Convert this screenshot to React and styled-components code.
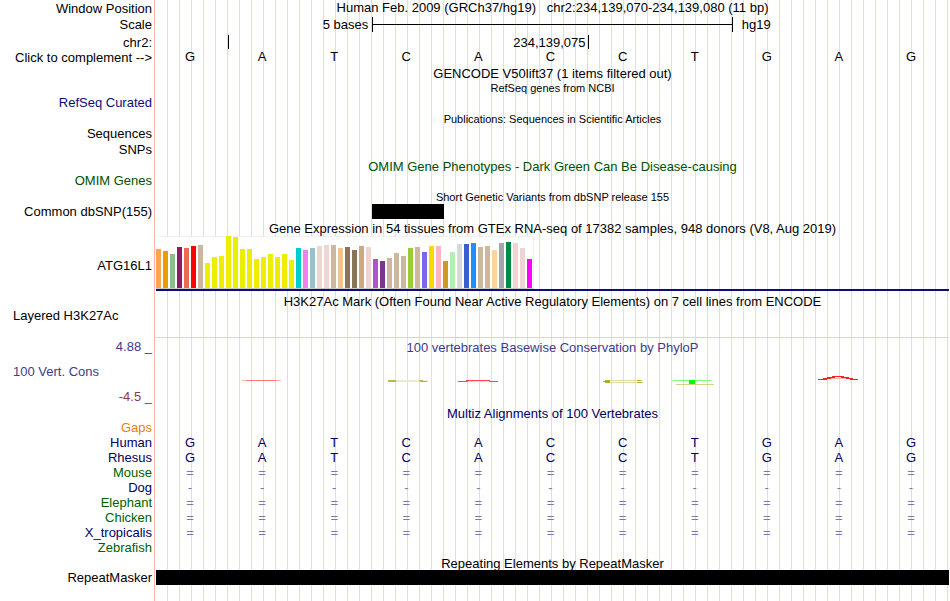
import React from 'react';
import styled, { createGlobalStyle } from 'styled-components';

const GlobalStyle = createGlobalStyle`
  * {
    box-sizing: border-box;
  }

  body {
    margin: 0;
    background: #fff;
    color: #000;
    font: 13px/15px "Liberation Sans", Arial, sans-serif;
  }
`;

const Browser = styled.main`
  display: flex;
  flex-direction: column;
  min-height: 100vh;
  padding-right: 1px;
`;

const Row = styled.section`
  display: flex;
  gap: 1px;
  height: ${({ $height }) => ($height ? `${$height}px` : 'auto')};
  flex: ${({ $height }) => ($height ? 'none' : '1')};
`;

const Label = styled.div`
  display: flex;
  flex: none;
  flex-direction: column;
  justify-content: ${({ $middle }) => ($middle ? 'center' : 'flex-start')};
  width: 155px;
  padding: 0 2px 0 13px;
  border-right: 1px solid #ffb4b4;
  color: ${({ $color }) => $color || '#000'};
  text-align: ${({ $left }) => ($left ? 'left' : 'right')};
  white-space: nowrap;
`;

const Plot = styled.div`
  flex: 1;
  min-width: 0;
  border-bottom: ${({ $rule }) => ($rule ? '1px solid #ffd080' : 'none')};
  background: repeating-linear-gradient(
    to right,
    transparent 0 11px,
    #dcdcf8 11px 12px
  );
`;

const Title = styled.h2`
  margin: 0;
  color: ${({ $color }) => $color || '#000'};
  font-size: ${({ $small }) => ($small ? '11px' : '13px')};
  font-weight: normal;
  line-height: 15px;
  text-align: center;
  white-space: pre;
`;

const Columns = styled.div`
  display: grid;
  grid-template-columns: repeat(11, 1fr);
`;

const Bases = styled(Columns)`
  color: ${({ $color }) => $color || '#000'};
`;

const Base = styled.span`
  padding-right: 4px;
  text-align: center;
`;

const ScaleText = styled.span`
  grid-column: 1 / 4;
  padding-right: 4px;
  text-align: right;
`;

const ScaleBar = styled.div`
  display: flex;
  grid-column: 4 / 9;
  align-items: center;
  height: 15px;
  border: solid #000;
  border-width: 0 1px;

  &::before {
    content: '';
    flex: 1;
    height: 1px;
    background: #000;
  }
`;

const Assembly = styled.span`
  grid-column: 9 / 11;
  padding-left: 9px;
`;

const Tick = styled.div`
  grid-column: 2;
  height: 14px;
  border-left: 1px solid #000;
`;

const Position = styled.span`
  grid-column: 3 / 7;
  height: 14px;
  padding-right: 2px;
  border-right: 1px solid #000;
  text-align: right;
`;

const ComplementButton = styled.button`
  padding: 0;
  border: 0;
  background: none;
  color: inherit;
  font: inherit;
  text-align: right;
  cursor: pointer;
`;

const Variant = styled.div`
  grid-column: 4;
  height: 15px;
  background: #000;
`;

const Expression = styled.div`
  height: 55px;
  border-bottom: 2px solid #0c0c78;
`;

const Bars = styled.div`
  display: flex;
  align-items: flex-end;
  gap: 2px;
  width: fit-content;
  height: 53px;
  padding-right: 1px;
  border-right: 1px solid #f0f0f0;
  border-bottom: 1px solid #c8c8c8;
  background: linear-gradient(#f0f0f0 0 1px, #fff 1px);
`;

const Bar = styled.div`
  width: 5px;
`;

const Range = styled(Label)`
  gap: 10px;
  padding-top: 1px;
`;

const RangeLine = styled.span`
  color: ${({ $color }) => $color};
  text-align: ${({ $left }) => ($left ? 'left' : 'right')};
`;

const Conservation = styled(Plot)`
  display: flex;
  flex-direction: column;
  gap: 10px;
  padding-top: 2px;
`;

const Graph = styled.svg`
  display: block;
  width: 100%;
  height: 30px;
`;

const Repeat = styled.div`
  height: 15px;
  background: #000;
`;

const NAVY = '#00005f';
const GREEN = '#005000';
const BLUE = '#3c3c8c';

const bases = 'GATCACCTGAG'.split('');

// [height, colour] for each of the 54 tissues
const tissues = [
  [39, '#ffa54f'], [37, '#ee9a00'], [34, '#8fbc8f'], [41, '#8b1c62'],
  [40, '#ee6a50'], [42, '#ff0000'], [43, '#cdb79e'], [25, '#eeee00'],
  [31, '#eeee00'], [32, '#eeee00'], [52, '#eeee00'], [51, '#eeee00'],
  [39, '#eeee00'], [39, '#eeee00'], [29, '#eeee00'], [31, '#eeee00'],
  [34, '#eeee00'], [31, '#eeee00'], [34, '#eeee00'], [28, '#eeee00'],
  [40, '#00cdcd'], [38, '#ee82ee'], [40, '#9ac0cd'], [42, '#eed5d2'],
  [43, '#eed5d2'], [43, '#cdb79e'], [40, '#eec591'], [41, '#8b7355'],
  [38, '#8b7355'], [42, '#cdaa7d'], [41, '#eed5d2'], [29, '#b452cd'],
  [27, '#7a378b'], [30, '#cdb79e'], [35, '#cdb79e'], [32, '#cdb79e'],
  [40, '#9acd32'], [41, '#cdb79e'], [36, '#7a67ee'], [42, '#ffd700'],
  [42, '#ffb6c1'], [27, '#cd9b1d'], [36, '#b4eeb4'], [44, '#d9d9d9'],
  [44, '#3a5fcd'], [45, '#1e90ff'], [41, '#cdb79e'], [42, '#cdb79e'],
  [38, '#ffd39b'], [45, '#a6a6a6'], [46, '#008b45'], [45, '#eed5d2'],
  [40, '#eed5d2'], [29, '#ff00ff'],
];

const species = [
  { name: 'Human', color: NAVY },
  { name: 'Rhesus', color: NAVY },
  { name: 'Mouse', color: '#005f00', mark: '=' },
  { name: 'Dog', color: NAVY, mark: '-' },
  { name: 'Elephant', color: '#005f00', mark: '=' },
  { name: 'Chicken', color: '#005f00', mark: '=' },
  { name: 'X_tropicalis', color: NAVY, mark: '=' },
];

const TitleRow = ({ height = 15, children, ...props }) => (
  <Row $height={height}>
    <Label />
    <Plot>
      <Title {...props}>{children}</Title>
    </Plot>
  </Row>
);

const LabelRow = ({ height = 16, color, left, rule, children }) => (
  <Row $height={height}>
    <Label $color={color} $left={left}>{children}</Label>
    <Plot $rule={rule} />
  </Row>
);

const PhyloP = () => (
  <Graph viewBox="0 0 793 30" preserveAspectRatio="none" shapeRendering="crispEdges" aria-hidden="true">
    <path d="M86 15h39v1h-39z" fill="#ffb4b4" />
    <path d="M91 15h30v1h-30z" fill="#ff7878" />

    <path d="M232 15h40v2h-40z" fill="#ebebc8" />
    <path d="M232 15h8v2h-8zM263 15h4v1h-4zM264 16h7v1h-7z" fill="#b9b946" />

    <path d="M302 16h10v1h-10zM333 16h9v1h-9z" fill="#ff4646" />
    <path d="M310 15h24v1h-24z" fill="#ff4646" />
    <path d="M312 16h20v1h-20z" fill="#ffdcdc" />

    <path d="M449 15h38v1h-38zM449 17h38v1h-38z" fill="#dcdca0" />
    <path d="M447 16h7v1h-7zM449 15h5v1h-5zM449 17h5v1h-5zM481 15h4v1h-4zM481 17h5v1h-5z" fill="#afaf28" />

    <path d="M517 15h38v1h-38z" fill="#78ff78" />
    <path d="M520 19h38v1h-38z" fill="#d2d28c" />
    <path d="M533 15h6v4h-6z" fill="#00ff00" />

    <path d="M662 14h9v1h-9zM667 13h8v1h-8zM671 12h8v1h-8zM676 11h12v1h-12zM685 12h8v1h-8zM690 13h7v1h-7zM694 14h8v1h-8z" fill="#ff1e1e" />
    <path d="M675 13h15v1h-15z" fill="#ffb4b4" />
  </Graph>
);

const App = () => {
  return (
    <>
      <GlobalStyle />
      <Browser>
        <Row $height={17}>
          <Label $middle>Window Position</Label>
          <Plot>
            <Title>{'Human Feb. 2009 (GRCh37/hg19)   chr2:234,139,070-234,139,080 (11 bp)'}</Title>
          </Plot>
        </Row>
        <Row $height={18}>
          <Label>Scale</Label>
          <Plot>
            <Columns>
              <ScaleText>5 bases</ScaleText>
              <ScaleBar />
              <Assembly>hg19</Assembly>
            </Columns>
          </Plot>
        </Row>
        <Row $height={14}>
          <Label>chr2:</Label>
          <Plot>
            <Columns>
              <Tick />
              <Position>234,139,075</Position>
            </Columns>
          </Plot>
        </Row>
        <Row $height={17}>
          <Label $middle>
            <ComplementButton type="button">{'Click to complement -->'}</ComplementButton>
          </Label>
          <Plot>
            <Bases>
              {bases.map((base, i) => <Base key={i}>{base}</Base>)}
            </Bases>
          </Plot>
        </Row>

        {/* Genes, publications and variants */}
        <TitleRow>GENCODE V50lift37 (1 items filtered out)</TitleRow>
        <TitleRow height={14} $small>RefSeq genes from NCBI</TitleRow>
        <LabelRow height={17} color="#0c0c78">RefSeq Curated</LabelRow>
        <TitleRow height={14} $small>Publications: Sequences in Scientific Articles</TitleRow>
        <LabelRow>Sequences</LabelRow>
        <LabelRow height={17}>SNPs</LabelRow>
        <TitleRow height={14} $color={GREEN}>OMIM Gene Phenotypes - Dark Green Can Be Disease-causing</TitleRow>
        <LabelRow height={17} color={GREEN}>OMIM Genes</LabelRow>
        <TitleRow height={14} $small>Short Genetic Variants from dbSNP release 155</TitleRow>
        <Row $height={17}>
          <Label>Common dbSNP(155)</Label>
          <Plot>
            <Columns>
              <Variant />
            </Columns>
          </Plot>
        </Row>

        {/* Expression and regulation */}
        <TitleRow>Gene Expression in 54 tissues from GTEx RNA-seq of 17382 samples, 948 donors (V8, Aug 2019)</TitleRow>
        <Row $height={58}>
          <Label $middle>ATG16L1</Label>
          <Plot>
            <Expression>
              <Bars>
                {tissues.map(([height, color], i) => (
                  <Bar key={i} style={{ height, background: color }} />
                ))}
              </Bars>
            </Expression>
          </Plot>
        </Row>
        <TitleRow height={14}>H3K27Ac Mark (Often Found Near Active Regulatory Elements) on 7 cell lines from ENCODE</TitleRow>
        <LabelRow height={30} left rule>Layered H3K27Ac</LabelRow>

        {/* Conservation */}
        <Row $height={68}>
          <Range>
            <RangeLine $color={BLUE}>4.88 _</RangeLine>
            <RangeLine $color={BLUE} $left>100 Vert. Cons</RangeLine>
            <RangeLine $color="#8c3c3c">-4.5 _</RangeLine>
          </Range>
          <Conservation>
            <Title $color={BLUE}>100 vertebrates Basewise Conservation by PhyloP</Title>
            <PhyloP />
          </Conservation>
        </Row>
        <TitleRow height={14} $color={NAVY}>Multiz Alignments of 100 Vertebrates</TitleRow>
        <LabelRow height={15} color="#e68200">Gaps</LabelRow>
        {species.map(({ name, color, mark }) => (
          <Row key={name} $height={15}>
            <Label $color={color}>{name}</Label>
            <Plot>
              <Bases $color={mark ? '#7878af' : NAVY}>
                {bases.map((base, i) => <Base key={i}>{mark || base}</Base>)}
              </Bases>
            </Plot>
          </Row>
        ))}
        <LabelRow color="#005f00">Zebrafish</LabelRow>

        <TitleRow height={14}>Repeating Elements by RepeatMasker</TitleRow>
        <Row $height={15}>
          <Label>RepeatMasker</Label>
          <Plot>
            <Repeat />
          </Plot>
        </Row>
        <Row>
          <Label />
          <Plot />
        </Row>
      </Browser>
    </>
  );
};

export default App;
